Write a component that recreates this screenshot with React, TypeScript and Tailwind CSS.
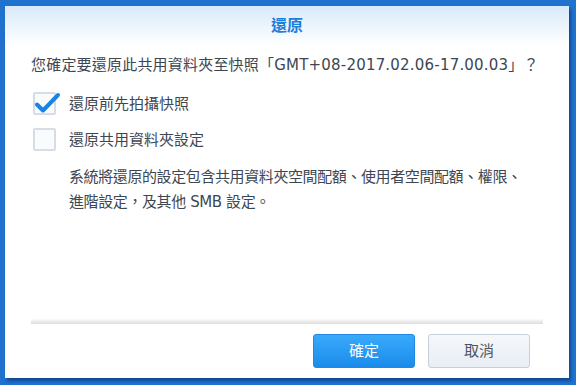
import React from "react";

const font = { fontFamily: '"DejaVu Sans", "Noto Sans CJK TC", sans-serif' };

function Checkbox({ checked }: { checked?: boolean }) {
  return (
    <div className="relative w-[23px] h-[23px] ml-[2px] shrink-0 rounded-[2px] border-2 border-[#d5dee7] bg-[#f9fbfc]">
      {checked && (
        <svg className="absolute -left-[2px] -top-[4px] w-[28px] h-[28px]" viewBox="0 0 28 28">
          <path
            d="M4 14.5 L10 20.5 L25 5"
            fill="none"
            stroke="#1784e6"
            strokeWidth={4}
            strokeLinecap="round"
            strokeLinejoin="round"
          />
        </svg>
      )}
    </div>
  );
}

export default function App() {
  return (
    <div className="w-[576px] h-[385px] bg-[#1f73cf] pl-[5px] pt-[6px]" style={font}>
      <div className="w-[564px] h-[372px] bg-white flex flex-col shadow-[2px_3px_3px_rgba(0,20,70,0.45)] text-[15px] text-[#3d4752]">
        {/* title */}
        <div className="h-[40px] flex items-center justify-center bg-gradient-to-b from-[#d9eafa] to-white">
          <span className="text-[16px] font-semibold text-[#1b7fdc]">還原</span>
        </div>

        <div className="flex-1 px-[26px] pt-[9px]">
          <p className="leading-[20px] whitespace-nowrap tracking-[0.2px]">
            您確定要還原此共用資料夾至快照「GMT+08-2017.02.06-17.00.03」？
          </p>

          <div className="mt-[17px] flex items-center gap-[13px] h-[23px]">
            <Checkbox checked />
            <span className="leading-[20px]">還原前先拍攝快照</span>
          </div>
          <div className="mt-[13px] flex items-center gap-[13px] h-[23px]">
            <Checkbox />
            <span className="leading-[20px]">還原共用資料夾設定</span>
          </div>

          <p className="mt-[14px] pl-[38px] leading-[25px] tracking-[-0.4px] whitespace-nowrap">
            系統將還原的設定包含共用資料夾空間配額、使用者空間配額、權限、
            <br />
            進階設定，及其他 SMB 設定。
          </p>
        </div>

        {/* footer */}
        <div className="mx-[26px] h-[5px] bg-gradient-to-b from-[#fbfbfb] to-[#dcdcdc]" />
        <div className="flex justify-end gap-[13px] pr-[39px] pt-[10px] pb-[10px]">
          <button className="w-[102px] h-[34px] rounded-[3px] border border-[#2088e2] bg-gradient-to-b from-[#38aafa] to-[#1b8bec] text-white text-[15px]">
            確定
          </button>
          <button className="w-[102px] h-[34px] rounded-[3px] border border-[#c6d0da] bg-gradient-to-b from-[#f5f8fb] to-[#e8eef4] text-[#4b5561] text-[15px]">
            取消
          </button>
        </div>
      </div>
    </div>
  );
}
